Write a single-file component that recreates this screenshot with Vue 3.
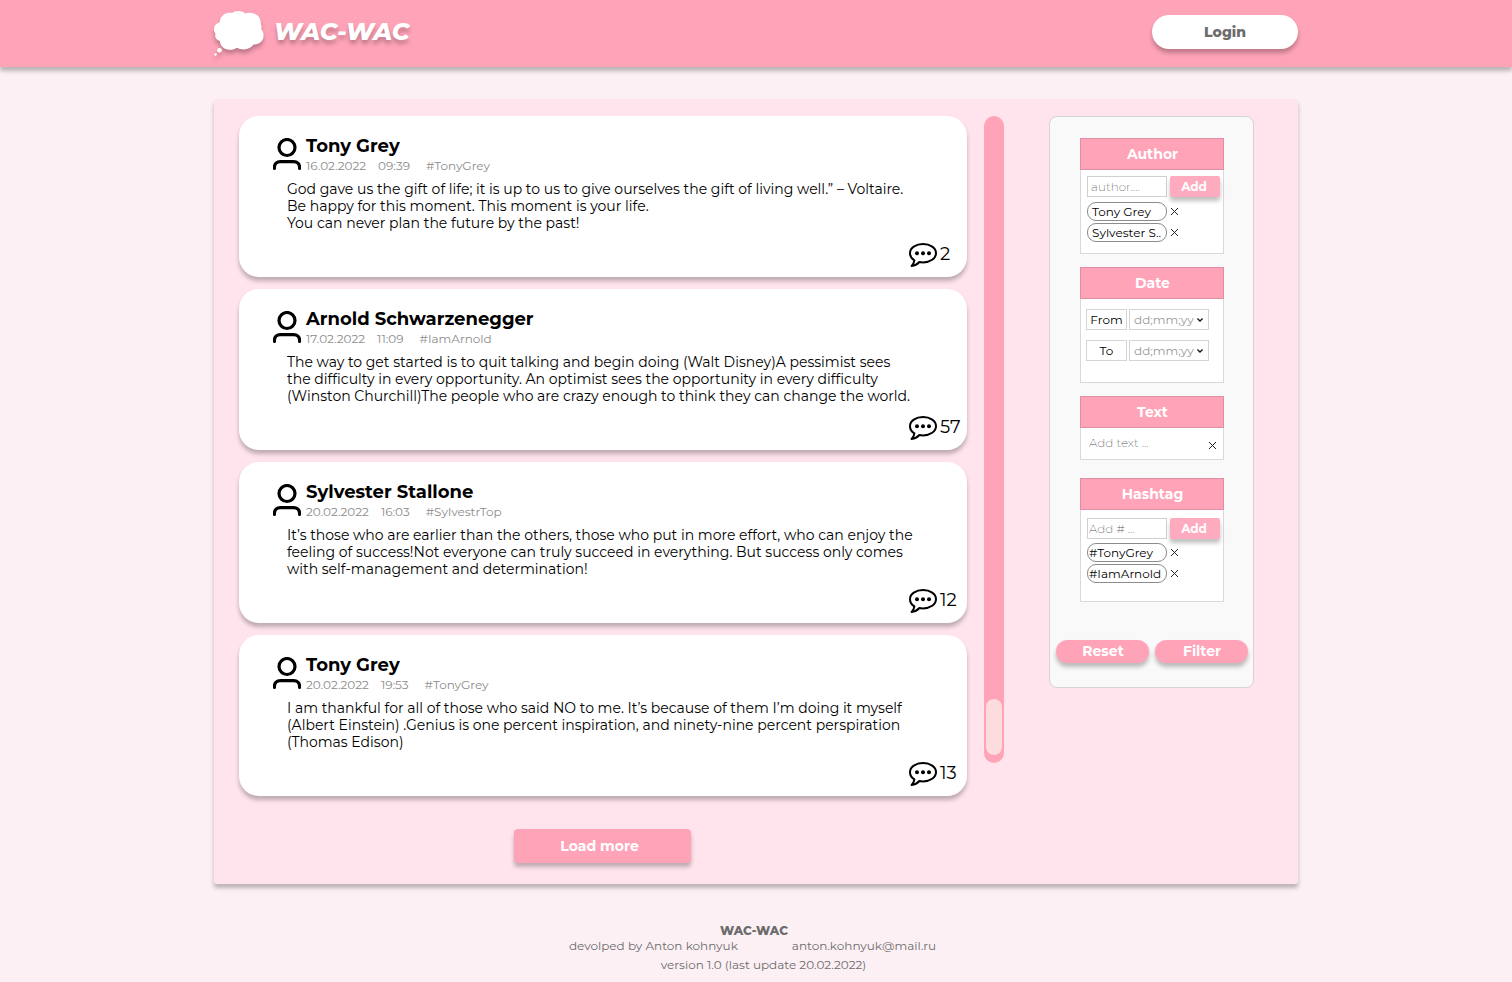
<script setup>
import { ref } from 'vue'

const posts = [
  {
    id: 1, author: 'Tony Grey', date: '16.02.2022', time: '09:39', tag: '#TonyGrey', comments: 2,
    lines: [
      'God gave us the gift of life; it is up to us to give ourselves the gift of living well.” – Voltaire.',
      'Be happy for this moment. This moment is your life.',
      'You can never plan the future by the past!'
    ]
  },
  {
    id: 2, author: 'Arnold Schwarzenegger', date: '17.02.2022', time: '11:09', tag: '#IamArnold', comments: 57,
    lines: [
      'The way to get started is to quit talking and begin doing (Walt Disney)A pessimist sees',
      'the difficulty in every opportunity. An optimist sees the opportunity in every difficulty',
      '(Winston Churchill)The people who are crazy enough to think they can change the world.'
    ]
  },
  {
    id: 3, author: 'Sylvester Stallone', date: '20.02.2022', time: '16:03', tag: '#SylvestrTop', comments: 12,
    lines: [
      'It’s those who are earlier than the others, those who put in more effort, who can enjoy the',
      'feeling of success!Not everyone can truly succeed in everything. But success only comes',
      'with self-management and determination!'
    ]
  },
  {
    id: 4, author: 'Tony Grey', date: '20.02.2022', time: '19:53', tag: '#TonyGrey', comments: 13,
    lines: [
      'I am thankful for all of those who said NO to me. It’s because of them I’m doing it myself',
      '(Albert Einstein) .Genius is one percent inspiration, and ninety-nine percent perspiration',
      '(Thomas Edison)'
    ]
  }
]

const authors = ref(['Tony Grey', 'Sylvester S..'])
const hashtags = ref(['#TonyGrey', '#IamArnold'])
const dates = [{ id: 'date-from', label: 'From' }, { id: 'date-to', label: 'To' }]
const authorQuery = ref('')
const textQuery = ref('')
const hashtagQuery = ref('')

function remove(list, item) {
  const at = list.indexOf(item)
  if (at >= 0) list.splice(at, 1)
}
</script>

<template>
  <div class="page">
    <header class="header">
      <div class="header-inner">
        <a class="logo" href="#">
          <svg class="cloud" width="50" height="46" viewBox="0 0 50 46" fill="#fff" aria-hidden="true">
            <path d="M5.600 11.500C6 4.500 12 .5 18 2C21.500-.8 28-.8 31 2.400C39 .4 47.500 4 46.800 13.200C47.800 15 47.500 17 47.300 18C51.500 23 50.500 33 39.500 33.600C36.500 38.500 29 40 23 36.800C18 40.500 7 39.800 5.800 30C1.500 28.500 .4 25 1.600 23C-1.600 19 0 12.500 5.600 11.500Z" />
            <circle cx="5.500" cy="39.300" r="2.300" />
            <circle cx="1.500" cy="43.500" r="1.200" />
          </svg>
          <span class="logo-text">WAC-WAC</span>
        </a>
        <button class="login" type="button">Login</button>
      </div>
    </header>

    <main class="main">
      <section class="feed" aria-label="Messages">
        <article v-for="post in posts" :key="post.id" class="card">
          <div class="card-head">
            <svg class="avatar" width="28" height="32" viewBox="0 0 28 32" fill="none" stroke="#000" stroke-width="3.200" aria-hidden="true">
              <circle cx="14" cy="9.500" r="8" />
              <path d="M1.400 30.400v-.9c0-3.500 2.500-5.900 6-5.900h13.200c3.500 0 6 2.400 6 5.900v.9" stroke-linecap="round" />
            </svg>
            <div>
              <h2 class="author">{{ post.author }}</h2>
              <div class="meta">
                <span>{{ post.date }}</span>
                <span class="time">{{ post.time }}</span>
                <span>{{ post.tag }}</span>
              </div>
            </div>
          </div>
          <p class="body">
            <span v-for="line in post.lines" :key="line" class="line">{{ line }}</span>
          </p>
          <div class="comments">
            <svg width="28" height="24" viewBox="0 0 28 24" aria-hidden="true">
              <path d="M14 1C21.200 1 27 5 27 10.200s-5.800 9.200-13 9.200c-1.300 0-2.500-.1-3.600-.4C8.600 21 6 22.600 2.600 23c1.500-1.500 2.500-3.300 2.800-5.600C2.700 15.700 1 13.100 1 10.200 1 5 6.800 1 14 1Z" fill="none" stroke="#000" stroke-width="2" stroke-linejoin="round" />
              <circle cx="8" cy="10.300" r="2" />
              <circle cx="14" cy="10.300" r="2" />
              <circle cx="20" cy="10.300" r="2" />
            </svg>
            <span>{{ post.comments }}</span>
          </div>
        </article>
        <button class="load" type="button">Load more</button>
      </section>

      <div class="track"><div class="thumb"></div></div>

      <aside class="filters">
        <section class="panel">
          <h3><label for="author-query">Author</label></h3>
          <div class="panel-body">
            <div class="add-row">
              <input id="author-query" v-model="authorQuery" class="field roomy" type="text" placeholder="author....">
              <button class="add" type="button">Add</button>
            </div>
            <ul class="chips">
              <li v-for="name in authors" :key="name">
                <span class="chip roomy">{{ name }}</span>
                <button class="remove" type="button" :aria-label="'Remove ' + name" @click="remove(authors, name)">
                  <svg width="7" height="7" viewBox="0 0 7 7" stroke="#222" aria-hidden="true"><path d="M0 0L7 7M7 0L0 7" /></svg>
                </button>
              </li>
            </ul>
          </div>
        </section>

        <section class="panel">
          <h3>Date</h3>
          <div class="panel-body dates">
            <div v-for="d in dates" :key="d.id" class="date-row">
              <label :for="d.id">{{ d.label }}</label>
              <div class="select-wrap">
                <select :id="d.id"><option>dd;mm;yy</option></select>
                <svg width="6" height="4" viewBox="0 0 6 4" fill="none" stroke="#111" stroke-width="1.300" aria-hidden="true"><path d="M.4 .5L3 3 5.600 .5" /></svg>
              </div>
            </div>
          </div>
        </section>

        <section class="panel short">
          <h3><label for="text-query">Text</label></h3>
          <div class="text-row">
            <input id="text-query" v-model="textQuery" type="text" placeholder="Add text ...">
            <button class="remove" type="button" aria-label="Clear text" @click="textQuery = ''">
              <svg width="7" height="7" viewBox="0 0 7 7" stroke="#222" aria-hidden="true"><path d="M0 0L7 7M7 0L0 7" /></svg>
            </button>
          </div>
        </section>

        <section class="panel tall">
          <h3><label for="hashtag-query">Hashtag</label></h3>
          <div class="panel-body">
            <div class="add-row">
              <input id="hashtag-query" v-model="hashtagQuery" class="field" type="text" placeholder="Add # ...">
              <button class="add" type="button">Add</button>
            </div>
            <ul class="chips">
              <li v-for="name in hashtags" :key="name">
                <span class="chip">{{ name }}</span>
                <button class="remove" type="button" :aria-label="'Remove ' + name" @click="remove(hashtags, name)">
                  <svg width="7" height="7" viewBox="0 0 7 7" stroke="#222" aria-hidden="true"><path d="M0 0L7 7M7 0L0 7" /></svg>
                </button>
              </li>
            </ul>
          </div>
        </section>

        <div class="actions">
          <button type="button">Reset</button>
          <button type="button">Filter</button>
        </div>
      </aside>
    </main>

    <footer class="footer">
      <strong>WAC-WAC</strong>
      <div class="credits">
        <span>devolped by Anton kohnyuk</span>
        <a href="mailto:anton.kohnyuk@mail.ru">anton.kohnyuk@mail.ru</a>
      </div>
      <div class="version">version 1.0 (last update 20.02.2022)</div>
    </footer>
  </div>
</template>

<style>
body {
  background: #fcf0f4;
}
</style>

<style scoped>
.page,
.page button,
.page input,
.page select {
  font-family: Montserrat, Inter, "Open Sans", sans-serif;
}
.page *,
.page {
  box-sizing: border-box;
}
button {
  border: 0;
  padding: 0;
  cursor: pointer;
}
.header {
  background: #ffa3b8;
  box-shadow: 0 4px 4px rgba(0, 0, 0, 0.25);
}
.header-inner {
  display: flex;
  align-items: flex-start;
  justify-content: space-between;
  max-width: 1084px;
  height: 67px;
  margin: 0 auto;
  padding-top: 11px;
}
.logo {
  display: flex;
  gap: 10px;
  color: #fff;
  text-decoration: none;
}
.cloud {
  overflow: visible;
  filter: drop-shadow(0 4px 2px rgba(0, 0, 0, 0.25));
}
.logo-text {
  font-size: 24px;
  font-weight: 800;
  font-style: italic;
  line-height: 42px;
  text-shadow: 0 4px 4px rgba(0, 0, 0, 0.25);
}
.login {
  width: 146px;
  height: 34px;
  margin-top: 4px;
  border-radius: 17px;
  background: #fff;
  color: #6c6c6c;
  font-size: 14px;
  font-weight: 800;
  box-shadow: 0 4px 4px rgba(0, 0, 0, 0.25);
}
.main {
  display: flex;
  align-items: flex-start;
  max-width: 1084px;
  margin: 32px auto 0;
  padding: 17px 44px 21px 25px;
  border-radius: 3px;
  background: #ffe4ed;
  box-shadow: 0 4px 4px rgba(0, 0, 0, 0.25);
}
.feed {
  display: flex;
  flex: 1;
  flex-direction: column;
  gap: 12px;
}
.card {
  display: flex;
  flex-direction: column;
  min-height: 161px;
  padding: 19px 0 10px 34px;
  border-radius: 20px;
  background: #fff;
  box-shadow: 0 4px 4px rgba(0, 0, 0, 0.25);
}
.card-head {
  display: flex;
  gap: 5px;
}
.avatar {
  margin-top: 3px;
}
.author {
  margin: 0;
  font-size: 18px;
  font-weight: 700;
  line-height: 22px;
}
.meta {
  display: flex;
  margin-top: 1px;
  color: #8c8c8c;
  font-size: 12px;
  line-height: 16px;
}
.time {
  margin: 0 16px 0 12px;
}
.body {
  margin: 7px 0 0 14px;
  font-size: 14px;
  font-variant-ligatures: none;
  line-height: 17px;
}
.line {
  display: block;
}
.comments {
  display: flex;
  align-items: flex-end;
  align-self: flex-end;
  gap: 3px;
  width: 58px;
  margin-top: auto;
  font-size: 18px;
  line-height: 25px;
}
.load {
  align-self: center;
  width: 177px;
  height: 34px;
  margin: 21px 2px 0 0;
  padding-right: 5px;
  border-radius: 4px;
  background: #ffa3b8;
  color: #fff;
  font-size: 14px;
  font-weight: 700;
  box-shadow: 0 4px 4px rgba(0, 0, 0, 0.25);
}
.track {
  display: flex;
  align-items: flex-end;
  width: 20px;
  height: 647px;
  margin: 0 45px 0 17px;
  padding: 2px 2px 8px;
  border-radius: 10px;
  background: #ffa3b8;
}
.thumb {
  flex: 1;
  height: 56px;
  border-radius: 8px;
  background: #fcdcdc;
}
.filters {
  display: flex;
  flex-direction: column;
  gap: 13px;
  width: 205px;
  padding: 21px 5px 24px 6px;
  border: 1px solid #d4d4d4;
  border-radius: 8px;
  background: #f9f9f9;
}
.panel {
  min-height: 116px;
  margin: 0 24px;
  border: 1px solid #d9d9d9;
  background: #fff;
}
.panel.short {
  min-height: 64px;
}
.panel.tall {
  min-height: 124px;
  margin-top: 5px;
}
.panel h3 {
  margin: -1px -1px 0;
  padding-left: 1px;
  border: 1px solid #e08fa2;
  background: #ffa3b8;
  color: #fff;
  font-size: 14px;
  font-weight: 700;
  line-height: 30px;
  text-align: center;
}
.panel-body {
  padding: 6px 3px 0 6px;
}
.tall .panel-body {
  padding-top: 8px;
}
.add-row {
  display: flex;
  gap: 3px;
}
.field {
  width: 80px;
  height: 21px;
  padding: 0 1px;
  border: 1px solid #d0d0d0;
  background: #fff;
  font-size: 12px;
  outline: none;
}
.field.roomy {
  padding-left: 3px;
}
input::placeholder {
  color: #555;
  font-weight: 200;
  opacity: 1;
}
.add {
  width: 50px;
  height: 21px;
  padding-right: 2px;
  border-radius: 2px;
  background: #ffabbf;
  color: #fff;
  font-size: 12px;
  font-weight: 700;
  box-shadow: 0 4px 4px rgba(0, 0, 0, 0.25);
}
.chips {
  display: flex;
  flex-direction: column;
  gap: 2px;
  margin: 5px 0 0;
  padding: 0;
  list-style: none;
}
.tall .chips {
  margin-top: 4px;
}
.chips li {
  display: flex;
  gap: 4px;
}
.chip {
  width: 80px;
  height: 19px;
  padding-left: 1px;
  border: 1px solid #8c8c8c;
  border-radius: 9px;
  font-size: 12px;
  line-height: 18px;
  white-space: nowrap;
}
.chip.roomy {
  padding-left: 4px;
}
.remove {
  display: flex;
  align-items: center;
  background: none;
}
.dates {
  display: flex;
  flex-direction: column;
  gap: 10px;
  padding: 10px 0 0 5px;
}
.date-row {
  display: flex;
  gap: 2px;
}
.date-row label {
  width: 41px;
  border: 1px solid #d4d4d4;
  font-size: 12px;
  line-height: 19px;
  text-align: center;
}
.select-wrap {
  display: flex;
  align-items: center;
  width: 80px;
  height: 21px;
  padding-right: 5px;
  border: 1px solid #d4d4d4;
}
.select-wrap select {
  flex: 1;
  min-width: 0;
  height: 19px;
  padding: 0 0 0 4px;
  border: 0;
  background: none;
  color: #999;
  font-size: 12px;
  appearance: none;
  outline: none;
}
.text-row {
  display: flex;
  justify-content: space-between;
  padding: 3px 7px 0 8px;
}
.text-row input {
  width: 100px;
  height: 22px;
  padding: 0;
  border: 0;
  background: none;
  font-size: 12px;
  outline: none;
}
.text-row .remove {
  padding-top: 6px;
}
.actions {
  display: flex;
  gap: 6px;
  margin-top: 25px;
}
.actions button {
  flex: 1;
  height: 23px;
  padding: 0 0 2px 1px;
  border-radius: 12px;
  background: #ffa3b8;
  color: #fff;
  font-size: 14px;
  font-weight: 700;
  box-shadow: 0 4px 4px rgba(0, 0, 0, 0.25);
}
.footer {
  display: flex;
  flex-direction: column;
  align-items: center;
  padding: 39px 4px 8px 0;
  color: #6c6c6c;
  font-size: 12px;
  line-height: 15px;
}
.footer strong {
  font-weight: 800;
}
.credits {
  display: flex;
  gap: 54px;
  padding-right: 3px;
}
.footer a {
  color: inherit;
  text-decoration: none;
}
.version {
  margin-top: 4px;
  padding-left: 19px;
}
</style>
